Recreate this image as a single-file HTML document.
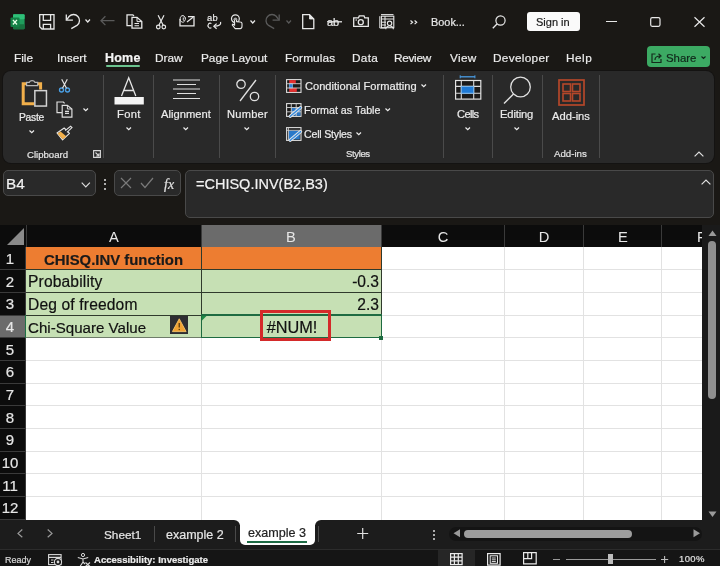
<!DOCTYPE html>
<html><head><meta charset="utf-8">
<style>
*{margin:0;padding:0;box-sizing:border-box}
html,body{width:720px;height:566px;overflow:hidden;background:#1a1815;font-family:"Liberation Sans",sans-serif;color:#f0f0f0}
.a{position:absolute}
.t{position:absolute;white-space:nowrap;line-height:1;will-change:transform;-webkit-text-stroke:0.2px currentColor}
svg{position:absolute;overflow:visible}
</style></head><body>

<svg style="left:9.50px;top:13.50px" width="15" height="16" viewBox="0 0 15 16">
<rect x="3" y="0.3" width="11.6" height="14.9" rx="1.2" fill="#1f9d5c"/>
<rect x="3" y="0.3" width="11.6" height="5" rx="1" fill="#2fbf78"/>
<rect x="3" y="10.2" width="11.6" height="5" rx="1" fill="#17723f"/>
<rect x="0.5" y="3.4" width="9" height="9.5" rx="1" fill="#138246"/>
<path d="M2.9 5.9 L7 10.5 M7 5.9 L2.9 10.5" stroke="#e8ffe8" stroke-width="1.3"/>
</svg>
<svg style="left:38.50px;top:13.50px" width="16" height="16" viewBox="0 0 16 16"><path d="M0.7 0.7 H15 V15 H3 L0.7 12.7 Z" fill="none" stroke="#e8e8e8" stroke-width="1.3"/>
<path d="M4.3 0.7 V6.4 H11.6 V0.7" fill="none" stroke="#e8e8e8" stroke-width="1.3"/>
<path d="M4.3 15 V10.3 H11.6 V15" fill="none" stroke="#e8e8e8" stroke-width="1.3"/></svg>
<svg style="left:65.00px;top:13.00px" width="16" height="17" viewBox="0 0 16 17"><path d="M1.3 1.4 V7.2 H7.9" fill="none" stroke="#e8e8e8" stroke-width="1.3"/>
<path d="M1.8 6.7 L4.26 3.26 A6 6 0 1 1 12.36 12.1 L6.3 15.6" fill="none" stroke="#e8e8e8" stroke-width="1.3"/></svg>
<svg style="left:84.50px;top:19.00px" width="6" height="4" viewBox="0 0 6 4"><path d="M0.5 0.5 L2.75 3 L5 0.5" fill="none" stroke="#e8e8e8" stroke-width="1.2"/></svg>
<svg style="left:100.00px;top:16.00px" width="15" height="10" viewBox="0 0 15 10"><path d="M14.5 4.7 H1 M5.4 0.3 L1 4.7 L5.4 9.1" fill="none" stroke="#5a5a5a" stroke-width="1.3"/></svg>
<svg style="left:126.00px;top:14.00px" width="17" height="15" viewBox="0 0 17 15"><path d="M5.5 11.7 H1 V0.8 H6.8 L8 2" fill="none" stroke="#e8e8e8" stroke-width="1.3"/>
<path d="M6 3.3 H11 L15.8 7.6 V14.2 H6 Z" fill="none" stroke="#e8e8e8" stroke-width="1.3"/>
<path d="M11 3.3 V7.6 H15.8" fill="none" stroke="#e8e8e8" stroke-width="1"/>
<path d="M8.5 9.5 H13 M8.5 11.7 H13" stroke="#e8e8e8" stroke-width="1.1"/></svg>
<svg style="left:155.50px;top:14.50px" width="10" height="15" viewBox="0 0 10 15"><circle cx="2.3" cy="12" r="1.8" fill="none" stroke="#e8e8e8" stroke-width="1.2"/>
<circle cx="7.8" cy="12" r="1.8" fill="none" stroke="#e8e8e8" stroke-width="1.2"/>
<path d="M2.9 10.3 L8 0.2 M7.2 10.3 L2.1 0.2" stroke="#e8e8e8" stroke-width="1.2"/></svg>
<svg style="left:178.50px;top:14.00px" width="16" height="13" viewBox="0 0 16 13"><path d="M1 5 V11.8 H15 V2.6 H9" fill="none" stroke="#e8e8e8" stroke-width="1.3"/>
<path d="M8 8 L14 3.2" stroke="#e8e8e8" stroke-width="1.2"/>
<path d="M6.3 4.5 A2.6 3.3 0 1 0 5.5 7.3 M4.3 3.5 V5.8 A1 1 0 0 0 6.3 5.5 V3.5" fill="none" stroke="#e8e8e8" stroke-width="1"/></svg>
<div class="t" style="top:13.00px;font-size:9.40px;left:207.40px;color:#e8e8e8;letter-spacing:0.2px;">ab</div>
<svg style="left:207.00px;top:20.50px" width="16" height="9" viewBox="0 0 16 9"><path d="M4.4 2.6 A2.1 2.5 0 1 0 4.4 6.6" fill="none" stroke="#e8e8e8" stroke-width="1.1"/>
<path d="M13.6 0.9 C14.2 3.6 12.5 5.2 7.2 5.2" fill="none" stroke="#e8e8e8" stroke-width="1.2"/>
<path d="M9.6 2.6 L6.8 5.2 L9.6 7.8" fill="none" stroke="#e8e8e8" stroke-width="1.2"/></svg>
<svg style="left:230.50px;top:14.00px" width="12" height="16" viewBox="0 0 12 16"><circle cx="4.4" cy="4.7" r="3.9" fill="none" stroke="#e8e8e8" stroke-width="1.2"/>
<circle cx="4.4" cy="5.3" r="1.9" fill="#a0a0a0"/>
<path d="M3.6 6 V11.2 L1.8 10 L1.2 11 L4.2 14.6 H9.2 C10.6 14.6 11 13.4 11 12 V9.6 C11 8.6 10.3 8 9.3 8 L5.6 7.6 V6" fill="#1a1815" stroke="#e8e8e8" stroke-width="1.1" stroke-linejoin="round"/></svg>
<svg style="left:249.80px;top:19.50px" width="6" height="4" viewBox="0 0 6 4"><path d="M0.5 0.5 L2.75 3 L5 0.5" fill="none" stroke="#e8e8e8" stroke-width="1.2"/></svg>
<svg style="left:266.00px;top:13.00px" width="16" height="17" viewBox="0 0 16 17"><path d="M13.2 1.4 V7.2 H6.6" fill="none" stroke="#5a5a5a" stroke-width="1.3"/>
<path d="M12.7 6.7 L10.24 3.26 A6 6 0 1 0 2.14 12.1 L8.2 15.6" fill="none" stroke="#5a5a5a" stroke-width="1.3"/></svg>
<svg style="left:285.50px;top:19.50px" width="6" height="4" viewBox="0 0 6 4"><path d="M0.5 0.5 L2.75 3 L5 0.5" fill="none" stroke="#5a5a5a" stroke-width="1.2"/></svg>
<svg style="left:302.00px;top:14.00px" width="13" height="15.5" viewBox="0 0 13 15.5"><path d="M0.7 0.7 H7.5 L11.8 5 V14.6 H0.7 Z" fill="none" stroke="#e8e8e8" stroke-width="1.3"/><path d="M7.5 0.7 V5 H11.8 Z" fill="#e8e8e8" stroke="#e8e8e8" stroke-width="0.8"/></svg>
<div class="t" style="top:17.00px;font-size:11.00px;left:327.00px;color:#e8e8e8;">ab</div>
<svg style="left:326.50px;top:21.30px" width="15" height="2" viewBox="0 0 15 2"><path d="M0 0.8 H15" stroke="#e8e8e8" stroke-width="1.3"/></svg>
<svg style="left:352.50px;top:14.50px" width="16" height="12" viewBox="0 0 16 12"><path d="M0.7 2.8 H5.5 L6.3 0.8 H11 L11.8 2.8 H15.3 V11.3 H0.7 Z" fill="none" stroke="#e8e8e8" stroke-width="1.3"/>
<circle cx="7.8" cy="7.2" r="2.5" fill="none" stroke="#e8e8e8" stroke-width="1.3"/><circle cx="3.2" cy="5" r="0.8" fill="#e8e8e8"/></svg>
<svg style="left:379.00px;top:14.00px" width="16" height="15.5" viewBox="0 0 16 15.5"><path d="M2 0.6 H14.5 M0.8 2.2 V14 H7" fill="none" stroke="#e8e8e8" stroke-width="1"/>
<rect x="2.4" y="2.2" width="12.4" height="11.5" fill="none" stroke="#e8e8e8" stroke-width="1.1"/>
<path d="M2.4 5 H14.8 M2.4 8.2 H7 M2.4 11 H7 M6 2.2 V13.7" stroke="#e8e8e8" stroke-width="1"/>
<circle cx="10.6" cy="9.3" r="2.2" fill="#1a1815" stroke="#e8e8e8" stroke-width="1.1"/>
<path d="M6.8 15.2 A3.8 3.3 0 0 1 14.4 15.2" fill="none" stroke="#e8e8e8" stroke-width="1.1"/></svg>
<svg style="left:409.50px;top:19.80px" width="8" height="5" viewBox="0 0 8 5"><path d="M0.5 0.5 L2.6 2.3 L0.5 4.1 M4.6 0.5 L6.7 2.3 L4.6 4.1" fill="none" stroke="#e8e8e8" stroke-width="1.2"/></svg>
<div class="t" style="top:17.00px;font-size:10.90px;left:431.30px;color:#e8e8e8;">Book...</div>
<svg style="left:492.00px;top:14.50px" width="14" height="14" viewBox="0 0 14 14"><circle cx="8.5" cy="5.5" r="4.6" fill="none" stroke="#e8e8e8" stroke-width="1.2"/><path d="M5.2 8.8 L0.8 13.2" stroke="#e8e8e8" stroke-width="1.3"/></svg>
<div class="a" style="left:527.00px;top:12.00px;width:53.00px;height:18.50px;background:#fafafa;border-radius:3px"></div>
<div class="t" style="top:17.00px;font-size:11.00px;left:535.90px;color:#1a1a1a;">Sign in</div>
<div class="a" style="left:606.00px;top:20.50px;width:10.50px;height:1.20px;background:#e8e8e8;"></div>
<svg style="left:649.50px;top:16.50px" width="11" height="10" viewBox="0 0 11 10"><rect x="0.7" y="0.7" width="9.3" height="8.6" rx="1.5" fill="none" stroke="#e8e8e8" stroke-width="1.2"/></svg>
<svg style="left:693.50px;top:16.50px" width="11" height="10" viewBox="0 0 11 10"><path d="M0.5 0.3 L10.5 9.7 M10.5 0.3 L0.5 9.7" stroke="#e8e8e8" stroke-width="1.2"/></svg>
<div class="t" style="top:53.00px;font-size:11.80px;left:14.00px;color:#ececec;letter-spacing:0px;">File</div>
<div class="t" style="top:53.00px;font-size:11.80px;left:57.00px;color:#ececec;letter-spacing:0px;">Insert</div>
<div class="t" style="top:53.00px;font-size:11.80px;left:155.20px;color:#ececec;letter-spacing:0px;">Draw</div>
<div class="t" style="top:53.00px;font-size:11.80px;left:201.00px;color:#ececec;letter-spacing:0px;">Page Layout</div>
<div class="t" style="top:53.00px;font-size:11.80px;left:285.40px;color:#ececec;letter-spacing:0.15px;">Formulas</div>
<div class="t" style="top:53.00px;font-size:11.80px;left:351.50px;color:#ececec;letter-spacing:0.3px;">Data</div>
<div class="t" style="top:53.00px;font-size:11.80px;left:394.00px;color:#ececec;letter-spacing:-0.3px;">Review</div>
<div class="t" style="top:53.00px;font-size:11.80px;left:449.50px;color:#ececec;letter-spacing:0.3px;">View</div>
<div class="t" style="top:53.00px;font-size:11.80px;left:493.10px;color:#ececec;letter-spacing:0.3px;">Developer</div>
<div class="t" style="top:53.00px;font-size:11.80px;left:566.00px;color:#ececec;letter-spacing:0.5px;">Help</div>
<div class="t" style="top:52.00px;font-size:12.50px;left:104.50px;color:#f5f5f5;font-weight:bold;letter-spacing:0.2px;">Home</div>
<div class="a" style="left:105.50px;top:65.20px;width:34.50px;height:2.00px;background:#6cc48f;border-radius:1px"></div>
<div class="a" style="left:647.00px;top:46.20px;width:63.00px;height:21.30px;background:#3caa63;border-radius:4px"></div>
<svg style="left:650.50px;top:52.00px" width="12" height="11" viewBox="0 0 12 11"><path d="M4.5 2 H1 V10.5 H10 V7" fill="none" stroke="#152a1c" stroke-width="1.2"/><path d="M4 8 C4 5 6 4 9 4 M7.5 1.8 L10 4 L7.5 6.2" fill="none" stroke="#152a1c" stroke-width="1.2"/></svg>
<div class="t" style="top:53.00px;font-size:11.40px;left:665.50px;color:#10261a;">Share</div>
<svg style="left:701.00px;top:56.00px" width="5" height="3.5" viewBox="0 0 5 3.5"><path d="M0.5 0.5 L2.5 2.5 L4.5 0.5" fill="none" stroke="#10261a" stroke-width="1.1"/></svg>
<div class="a" style="left:3.00px;top:71.00px;width:711.00px;height:91.50px;background:#292929;border-radius:8px;box-shadow:0 0 0 1px #141312"></div>
<div class="a" style="left:102.75px;top:75.00px;width:1.00px;height:82.50px;background:#4a4a4a;"></div>
<div class="a" style="left:152.75px;top:75.00px;width:1.00px;height:82.50px;background:#4a4a4a;"></div>
<div class="a" style="left:219.00px;top:75.00px;width:1.00px;height:82.50px;background:#4a4a4a;"></div>
<div class="a" style="left:274.50px;top:75.00px;width:1.00px;height:82.50px;background:#4a4a4a;"></div>
<div class="a" style="left:442.50px;top:75.00px;width:1.00px;height:82.50px;background:#4a4a4a;"></div>
<div class="a" style="left:492.00px;top:75.00px;width:1.00px;height:82.50px;background:#4a4a4a;"></div>
<div class="a" style="left:542.00px;top:75.00px;width:1.00px;height:82.50px;background:#4a4a4a;"></div>
<div class="a" style="left:599.00px;top:75.00px;width:1.00px;height:82.50px;background:#4a4a4a;"></div>
<svg style="left:21.00px;top:79.00px" width="27" height="29" viewBox="0 0 27 29"><path d="M5.5 4.8 H2.2 V24.7 H13" fill="none" stroke="#f2b04b" stroke-width="3"/>
<path d="M16.5 4.8 H19.6 V10.5" fill="none" stroke="#f2b04b" stroke-width="3"/>
<path d="M5.6 6.6 V3.3 H8.3 A3 2.6 0 0 1 13.9 3.3 H16.7 V6.6 Z" fill="#292929" stroke="#b8b8b8" stroke-width="1.2"/>
<rect x="13.85" y="11.65" width="11.6" height="15.4" fill="#292929" stroke="#d2d2d2" stroke-width="1.5"/></svg>
<div class="t" style="top:113.00px;font-size:10.30px;left:18.60px;color:#ececec;letter-spacing:-0.25px;">Paste</div>
<svg style="left:29.25px;top:130.00px" width="5.5" height="3.5" viewBox="0 0 5.5 3.5"><path d="M0.5 0.5 L2.75 2.7 L5 0.5" fill="none" stroke="#ececec" stroke-width="1.2"/></svg>
<svg style="left:59.00px;top:79.00px" width="11" height="14" viewBox="0 0 11 14"><circle cx="2.5" cy="11" r="2" fill="none" stroke="#4aa0e6" stroke-width="1.3"/>
<circle cx="8.5" cy="11" r="2" fill="none" stroke="#4aa0e6" stroke-width="1.3"/>
<path d="M3.5 9.3 L8.3 0.3 M7.5 9.3 L2.7 0.3" stroke="#e0e0e0" stroke-width="1.2"/></svg>
<svg style="left:56.00px;top:101.00px" width="17" height="17" viewBox="0 0 17 17"><path d="M6 11.7 H1 V1 H7.4 L8.6 2.3" fill="none" stroke="#dedede" stroke-width="1.2"/>
<path d="M6.2 4.3 H11.4 L15.9 8 V16.1 H6.2 Z" fill="#292929" stroke="#dedede" stroke-width="1.2"/>
<path d="M11.4 4.3 V8 H15.9" fill="none" stroke="#dedede" stroke-width="1"/>
<path d="M9 10.4 H13 M9 12.4 H13" stroke="#dedede" stroke-width="1.1"/></svg>
<svg style="left:82.95px;top:108.20px" width="5.5" height="3.5" viewBox="0 0 5.5 3.5"><path d="M0.5 0.5 L2.75 2.7 L5 0.5" fill="none" stroke="#ececec" stroke-width="1.2"/></svg>
<svg style="left:56.00px;top:125.00px" width="17" height="16" viewBox="0 0 17 16"><path d="M1 8 L5.6 12.5 L6.6 14.9 L1 8 Z" fill="#f2b04b"/>
<path d="M1 8 L8.2 3 L13.5 8.4 L6.6 14.9 Z" fill="#292929" stroke="#e6e6e6" stroke-width="1.1" stroke-linejoin="round"/>
<path d="M1.6 8.4 L4.5 6.5 L10.5 11.5 L6.6 14.3 Z" fill="#f2b04b"/>
<path d="M9.2 5.6 L14.6 1.2 L16 2.6 L11 7.3" fill="#292929" stroke="#e6e6e6" stroke-width="1.1"/></svg>
<div class="t" style="top:150.00px;font-size:9.60px;left:26.60px;color:#e4e4e4;">Clipboard</div>
<svg style="left:92.50px;top:150.00px" width="8" height="8" viewBox="0 0 8 8"><path d="M0.6 7.4 V0.6 H7.4 V7.4 Z" fill="none" stroke="#d8d8d8" stroke-width="1.1"/><path d="M2.5 2.5 L6 6 M6 3.2 V6 H3.2" fill="none" stroke="#d8d8d8" stroke-width="1.1"/></svg>
<svg style="left:113.50px;top:77.00px" width="30" height="28" viewBox="0 0 30 28"><path d="M7.5 19 L14.7 0.8 L21.8 19 M10 13.5 H19.5" fill="none" stroke="#e6e6e6" stroke-width="1.3"/>
<rect x="0.5" y="20" width="29.3" height="7.5" fill="#f4f4f4"/></svg>
<div class="t" style="top:109.00px;font-size:11.20px;left:116.80px;color:#ececec;letter-spacing:0.3px;">Font</div>
<svg style="left:125.75px;top:126.70px" width="5.5" height="3.5" viewBox="0 0 5.5 3.5"><path d="M0.5 0.5 L2.75 2.7 L5 0.5" fill="none" stroke="#ececec" stroke-width="1.2"/></svg>
<svg style="left:172.50px;top:79.00px" width="27" height="21" viewBox="0 0 27 21"><path d="M0 1 H27 M4 5.5 H23 M0 10 H27 M4 14.5 H23 M0 19.5 H27" stroke="#dedede" stroke-width="1.2"/></svg>
<div class="t" style="top:109.00px;font-size:11.20px;left:161.00px;color:#ececec;">Alignment</div>
<svg style="left:182.85px;top:126.70px" width="5.5" height="3.5" viewBox="0 0 5.5 3.5"><path d="M0.5 0.5 L2.75 2.7 L5 0.5" fill="none" stroke="#ececec" stroke-width="1.2"/></svg>
<svg style="left:235.50px;top:78.50px" width="24" height="23" viewBox="0 0 24 23"><circle cx="5" cy="5.2" r="4.2" fill="none" stroke="#e0e0e0" stroke-width="1.3"/>
<circle cx="18.5" cy="17.5" r="4.2" fill="none" stroke="#e0e0e0" stroke-width="1.3"/>
<path d="M20 1 L4 22" stroke="#e0e0e0" stroke-width="1.3"/></svg>
<div class="t" style="top:109.00px;font-size:11.10px;left:226.70px;color:#ececec;letter-spacing:0.25px;">Number</div>
<svg style="left:244.15px;top:126.70px" width="5.5" height="3.5" viewBox="0 0 5.5 3.5"><path d="M0.5 0.5 L2.75 2.7 L5 0.5" fill="none" stroke="#ececec" stroke-width="1.2"/></svg>
<svg style="left:286.00px;top:78.50px" width="16" height="14" viewBox="0 0 16 14"><rect x="0.6" y="0.6" width="14.4" height="12.8" fill="#1a1a1a" stroke="#dcdcdc" stroke-width="1.1"/>
<rect x="3.2" y="1.1" width="6.6" height="3.6" fill="#e53030"/>
<rect x="3.2" y="9" width="7.6" height="3.9" fill="#e53030"/>
<rect x="3.2" y="4.7" width="3.4" height="4.3" fill="#2f7fd8" stroke="#8cc4f2" stroke-width="0.6"/>
<path d="M0.6 4.7 H15 M0.6 9 H15" stroke="#cfcfcf" stroke-width="0.9"/></svg>
<div class="t" style="top:81.00px;font-size:11.10px;left:305.00px;color:#ececec;">Conditional Formatting</div>
<svg style="left:420.95px;top:84.00px" width="5.5" height="3.5" viewBox="0 0 5.5 3.5"><path d="M0.5 0.5 L2.75 2.7 L5 0.5" fill="none" stroke="#ececec" stroke-width="1.2"/></svg>
<svg style="left:286.00px;top:102.50px" width="16" height="14" viewBox="0 0 16 14"><rect x="0.6" y="0.6" width="14.4" height="12.8" fill="#1a1a1a" stroke="#dcdcdc" stroke-width="1.1"/>
<rect x="5.3" y="4.5" width="9.1" height="8.3" fill="#2a78c8"/>
<path d="M5.3 0.6 V13.4 M10.2 0.6 V13.4 M0.6 4.5 H15 M0.6 8.8 H15" stroke="#cfcfcf" stroke-width="0.9"/>
<path d="M4.2 13.2 L14.6 4.6" stroke="#e8e8e8" stroke-width="3.2" stroke-linecap="round"/>
<path d="M4.2 13.2 L14.6 4.6" stroke="#3a8ee0" stroke-width="1.4" stroke-linecap="round"/></svg>
<div class="t" style="top:105.00px;font-size:10.70px;left:304.00px;color:#ececec;">Format as Table</div>
<svg style="left:384.75px;top:108.00px" width="5.5" height="3.5" viewBox="0 0 5.5 3.5"><path d="M0.5 0.5 L2.75 2.7 L5 0.5" fill="none" stroke="#ececec" stroke-width="1.2"/></svg>
<svg style="left:286.00px;top:126.50px" width="16" height="14" viewBox="0 0 16 14"><rect x="0.6" y="0.6" width="14.4" height="12.8" fill="#1a1a1a" stroke="#dcdcdc" stroke-width="1.1"/>
<rect x="2.4" y="3.6" width="11.4" height="8.8" fill="#2a78c8"/>
<path d="M0.6 3.3 H15 M2.4 0.6 V13.4" stroke="#cfcfcf" stroke-width="0.9"/>
<path d="M4.2 13.2 L14.6 4.6" stroke="#e8e8e8" stroke-width="3.2" stroke-linecap="round"/>
<path d="M4.2 13.2 L14.6 4.6" stroke="#3a8ee0" stroke-width="1.4" stroke-linecap="round"/></svg>
<div class="t" style="top:129.00px;font-size:10.60px;left:304.00px;color:#ececec;letter-spacing:-0.2px;">Cell Styles</div>
<svg style="left:355.95px;top:131.90px" width="5.5" height="3.5" viewBox="0 0 5.5 3.5"><path d="M0.5 0.5 L2.75 2.7 L5 0.5" fill="none" stroke="#ececec" stroke-width="1.2"/></svg>
<div class="t" style="top:149.00px;font-size:9.60px;left:346.00px;color:#e4e4e4;letter-spacing:-0.4px;">Styles</div>
<svg style="left:455.00px;top:74.00px" width="27" height="27" viewBox="0 0 27 27"><path d="M5.2 2.8 H19.9" stroke="#4a9de6" stroke-width="1.3"/><path d="M5.2 1.3 V4.3 M19.9 1.3 V4.3" stroke="#4a9de6" stroke-width="1"/>
<rect x="0.6" y="6.5" width="25.2" height="18.6" fill="#1a1a1a" stroke="#e2e2e2" stroke-width="1.2"/>
<path d="M6.3 6.5 V25.1 M18.7 6.5 V25.1 M0.6 12.4 H25.8 M0.6 19.2 H25.8" stroke="#dcdcdc" stroke-width="1.1"/>
<rect x="6.3" y="12.4" width="12.4" height="6.8" fill="#1f7ad6" stroke="#7db9ee" stroke-width="0.9"/></svg>
<div class="t" style="top:109.00px;font-size:11.20px;left:456.60px;color:#ececec;letter-spacing:-0.7px;">Cells</div>
<svg style="left:464.75px;top:126.70px" width="5.5" height="3.5" viewBox="0 0 5.5 3.5"><path d="M0.5 0.5 L2.75 2.7 L5 0.5" fill="none" stroke="#ececec" stroke-width="1.2"/></svg>
<svg style="left:503.00px;top:76.00px" width="30" height="29" viewBox="0 0 30 29"><circle cx="17.5" cy="11" r="9.8" fill="none" stroke="#e0e0e0" stroke-width="1.3"/><path d="M10.5 18 L1 27.5" stroke="#e0e0e0" stroke-width="1.4"/></svg>
<div class="t" style="top:109.00px;font-size:11.20px;left:499.50px;color:#ececec;letter-spacing:-0.15px;">Editing</div>
<svg style="left:514.25px;top:126.70px" width="5.5" height="3.5" viewBox="0 0 5.5 3.5"><path d="M0.5 0.5 L2.75 2.7 L5 0.5" fill="none" stroke="#ececec" stroke-width="1.2"/></svg>
<svg style="left:557.50px;top:78.50px" width="27" height="27" viewBox="0 0 27 27"><rect x="1" y="1" width="25" height="25" fill="none" stroke="#b4472a" stroke-width="1.7"/>
<rect x="5" y="5" width="7.5" height="7.5" fill="none" stroke="#b4472a" stroke-width="1.6"/>
<rect x="14.5" y="5" width="7.5" height="7.5" fill="none" stroke="#b4472a" stroke-width="1.6"/>
<rect x="5" y="14.5" width="7.5" height="7.5" fill="none" stroke="#b4472a" stroke-width="1.6"/>
<rect x="14.5" y="14.5" width="7.5" height="7.5" fill="none" stroke="#b4472a" stroke-width="1.6"/></svg>
<div class="t" style="top:111.00px;font-size:11.20px;left:552.00px;color:#ececec;">Add-ins</div>
<div class="t" style="top:149.00px;font-size:9.70px;left:554.30px;color:#e4e4e4;">Add-ins</div>
<svg style="left:693.80px;top:150.50px" width="10" height="6" viewBox="0 0 10 6"><path d="M0.6 5.4 L5 1 L9.4 5.4" fill="none" stroke="#e0e0e0" stroke-width="1.2"/></svg>
<div class="a" style="left:2.50px;top:170.00px;width:93.00px;height:26.30px;background:#292929;border:1px solid #494949;border-radius:5px"></div>
<div class="t" style="top:176.00px;font-size:15.30px;left:6.30px;color:#f2f2f2;">B4</div>
<svg style="left:81.00px;top:182.00px" width="10" height="6" viewBox="0 0 10 6"><path d="M0.7 0.7 L4.8 4.8 L8.9 0.7" fill="none" stroke="#dcdcdc" stroke-width="1.2"/></svg>
<div class="a" style="left:104.00px;top:178.50px;width:2.20px;height:2.20px;background:#e0e0e0;border-radius:1px"></div>
<div class="a" style="left:104.00px;top:183.00px;width:2.20px;height:2.20px;background:#e0e0e0;border-radius:1px"></div>
<div class="a" style="left:104.00px;top:187.50px;width:2.20px;height:2.20px;background:#e0e0e0;border-radius:1px"></div>
<div class="a" style="left:114.00px;top:170.00px;width:67.00px;height:26.00px;background:#292929;border:1px solid #494949;border-radius:5px"></div>
<svg style="left:120.00px;top:177.00px" width="12" height="12" viewBox="0 0 12 12"><path d="M1 1 L11 11 M11 1 L1 11" stroke="#7a7a7a" stroke-width="1.2"/></svg>
<svg style="left:140.00px;top:177.00px" width="14" height="12" viewBox="0 0 14 12"><path d="M1 6 L5 10.5 L13 1" fill="none" stroke="#7a7a7a" stroke-width="1.2"/></svg>
<div class="t" style="top:178.00px;font-size:14.00px;left:163.50px;color:#e0e0e0;font-family:'Liberation Serif',serif;font-style:italic;">fx</div>
<div class="a" style="left:185.00px;top:170.00px;width:529.00px;height:48.00px;background:#292929;border:1px solid #494949;border-radius:5px"></div>
<div class="t" style="top:177.00px;font-size:14.50px;left:196.40px;color:#f2f2f2;">=CHISQ.INV(B2,B3)</div>
<svg style="left:700.50px;top:179.00px" width="10" height="6" viewBox="0 0 10 6"><path d="M0.6 5.4 L5 1 L9.4 5.4" fill="none" stroke="#e0e0e0" stroke-width="1.2"/></svg>
<div class="a" style="left:0.00px;top:225.00px;width:702.00px;height:22.00px;background:#0c0c0c;"></div>
<div class="a" style="left:201.00px;top:225.00px;width:180.00px;height:22.00px;background:#6b6b6b;"></div>
<svg style="left:0.00px;top:225.00px" width="26" height="22" viewBox="0 0 26 22"><polygon points="24,3 24,20 7,20" fill="#8a8a8a"/></svg>
<div class="a" style="left:25.50px;top:225.00px;width:1.00px;height:22.00px;background:#3a3a3a;"></div>
<div class="a" style="left:200.50px;top:225.00px;width:1.00px;height:22.00px;background:#3a3a3a;"></div>
<div class="a" style="left:380.50px;top:225.00px;width:1.00px;height:22.00px;background:#3a3a3a;"></div>
<div class="a" style="left:504.00px;top:225.00px;width:1.00px;height:22.00px;background:#3a3a3a;"></div>
<div class="a" style="left:583.00px;top:225.00px;width:1.00px;height:22.00px;background:#3a3a3a;"></div>
<div class="a" style="left:661.00px;top:225.00px;width:1.00px;height:22.00px;background:#3a3a3a;"></div>
<div class="t" style="top:230.00px;font-size:14.70px;left:83.50px;width:60.00px;text-align:center;color:#e6e6e6;-webkit-text-stroke:0;">A</div>
<div class="t" style="top:230.00px;font-size:14.70px;left:261.00px;width:60.00px;text-align:center;color:#e6e6e6;-webkit-text-stroke:0;">B</div>
<div class="t" style="top:230.00px;font-size:14.70px;left:412.75px;width:60.00px;text-align:center;color:#e6e6e6;-webkit-text-stroke:0;">C</div>
<div class="t" style="top:230.00px;font-size:14.70px;left:514.00px;width:60.00px;text-align:center;color:#e6e6e6;-webkit-text-stroke:0;">D</div>
<div class="t" style="top:230.00px;font-size:14.70px;left:592.50px;width:60.00px;text-align:center;color:#e6e6e6;-webkit-text-stroke:0;">E</div>
<div class="a" style="left:661.5px;top:225px;width:40.5px;height:22px;overflow:hidden">
<div class="t" style="top:5.00px;font-size:14.70px;left:35.30px;color:#e6e6e6;-webkit-text-stroke:0;">F</div>
</div>
<div class="a" style="left:0.00px;top:247.00px;width:26.00px;height:273.00px;background:#0c0c0c;"></div>
<div class="a" style="left:0.00px;top:315.04px;width:25.00px;height:22.68px;background:#6b6b6b;"></div>
<div class="a" style="left:0.00px;top:269.18px;width:26.00px;height:1.00px;background:#3a3a3a;"></div>
<div class="t" style="top:251.00px;font-size:15.00px;left:-3.20px;width:26.00px;text-align:center;color:#e6e6e6;">1</div>
<div class="a" style="left:0.00px;top:291.86px;width:26.00px;height:1.00px;background:#3a3a3a;"></div>
<div class="t" style="top:274.00px;font-size:15.00px;left:-3.20px;width:26.00px;text-align:center;color:#e6e6e6;">2</div>
<div class="a" style="left:0.00px;top:314.54px;width:26.00px;height:1.00px;background:#3a3a3a;"></div>
<div class="t" style="top:296.00px;font-size:15.00px;left:-3.20px;width:26.00px;text-align:center;color:#e6e6e6;">3</div>
<div class="a" style="left:0.00px;top:337.22px;width:26.00px;height:1.00px;background:#3a3a3a;"></div>
<div class="t" style="top:319.00px;font-size:15.00px;left:-3.20px;width:26.00px;text-align:center;color:#e6e6e6;">4</div>
<div class="a" style="left:0.00px;top:359.90px;width:26.00px;height:1.00px;background:#3a3a3a;"></div>
<div class="t" style="top:342.00px;font-size:15.00px;left:-3.20px;width:26.00px;text-align:center;color:#e6e6e6;">5</div>
<div class="a" style="left:0.00px;top:382.58px;width:26.00px;height:1.00px;background:#3a3a3a;"></div>
<div class="t" style="top:364.00px;font-size:15.00px;left:-3.20px;width:26.00px;text-align:center;color:#e6e6e6;">6</div>
<div class="a" style="left:0.00px;top:405.26px;width:26.00px;height:1.00px;background:#3a3a3a;"></div>
<div class="t" style="top:387.00px;font-size:15.00px;left:-3.20px;width:26.00px;text-align:center;color:#e6e6e6;">7</div>
<div class="a" style="left:0.00px;top:427.94px;width:26.00px;height:1.00px;background:#3a3a3a;"></div>
<div class="t" style="top:410.00px;font-size:15.00px;left:-3.20px;width:26.00px;text-align:center;color:#e6e6e6;">8</div>
<div class="a" style="left:0.00px;top:450.62px;width:26.00px;height:1.00px;background:#3a3a3a;"></div>
<div class="t" style="top:432.00px;font-size:15.00px;left:-3.20px;width:26.00px;text-align:center;color:#e6e6e6;">9</div>
<div class="a" style="left:0.00px;top:473.30px;width:26.00px;height:1.00px;background:#3a3a3a;"></div>
<div class="t" style="top:455.00px;font-size:15.00px;left:-3.20px;width:26.00px;text-align:center;color:#e6e6e6;">10</div>
<div class="a" style="left:0.00px;top:495.98px;width:26.00px;height:1.00px;background:#3a3a3a;"></div>
<div class="t" style="top:478.00px;font-size:15.00px;left:-3.20px;width:26.00px;text-align:center;color:#e6e6e6;">11</div>
<div class="a" style="left:0.00px;top:518.66px;width:26.00px;height:1.00px;background:#3a3a3a;"></div>
<div class="t" style="top:500.00px;font-size:15.00px;left:-3.20px;width:26.00px;text-align:center;color:#e6e6e6;">12</div>
<div class="a" style="left:25.00px;top:247.00px;width:1.00px;height:273.00px;background:#3a3a3a;"></div>
<div class="a" style="left:25.00px;top:315.04px;width:1.50px;height:22.68px;background:#1e7145;"></div>
<div class="a" style="left:26.00px;top:247.00px;width:676.00px;height:273.00px;background:#ffffff;"></div>
<div class="a" style="left:26.00px;top:269.18px;width:676.00px;height:1.00px;background:#e2e2e2;"></div>
<div class="a" style="left:26.00px;top:291.86px;width:676.00px;height:1.00px;background:#e2e2e2;"></div>
<div class="a" style="left:26.00px;top:314.54px;width:676.00px;height:1.00px;background:#e2e2e2;"></div>
<div class="a" style="left:26.00px;top:337.22px;width:676.00px;height:1.00px;background:#e2e2e2;"></div>
<div class="a" style="left:26.00px;top:359.90px;width:676.00px;height:1.00px;background:#e2e2e2;"></div>
<div class="a" style="left:26.00px;top:382.58px;width:676.00px;height:1.00px;background:#e2e2e2;"></div>
<div class="a" style="left:26.00px;top:405.26px;width:676.00px;height:1.00px;background:#e2e2e2;"></div>
<div class="a" style="left:26.00px;top:427.94px;width:676.00px;height:1.00px;background:#e2e2e2;"></div>
<div class="a" style="left:26.00px;top:450.62px;width:676.00px;height:1.00px;background:#e2e2e2;"></div>
<div class="a" style="left:26.00px;top:473.30px;width:676.00px;height:1.00px;background:#e2e2e2;"></div>
<div class="a" style="left:26.00px;top:495.98px;width:676.00px;height:1.00px;background:#e2e2e2;"></div>
<div class="a" style="left:200.50px;top:247.00px;width:1.00px;height:273.00px;background:#e2e2e2;"></div>
<div class="a" style="left:380.50px;top:247.00px;width:1.00px;height:273.00px;background:#e2e2e2;"></div>
<div class="a" style="left:504.00px;top:247.00px;width:1.00px;height:273.00px;background:#e2e2e2;"></div>
<div class="a" style="left:583.00px;top:247.00px;width:1.00px;height:273.00px;background:#e2e2e2;"></div>
<div class="a" style="left:661.00px;top:247.00px;width:1.00px;height:273.00px;background:#e2e2e2;"></div>
<div class="a" style="left:26.00px;top:247.00px;width:355.00px;height:22.68px;background:#ed7d31;"></div>
<div class="a" style="left:26.00px;top:269.68px;width:355.00px;height:68.04px;background:#c6e0b4;"></div>
<div class="a" style="left:26.00px;top:269.18px;width:355.50px;height:1.00px;background:#2f3a2c;"></div>
<div class="a" style="left:26.00px;top:291.86px;width:355.50px;height:1.00px;background:#2f3a2c;"></div>
<div class="a" style="left:26.00px;top:314.54px;width:355.50px;height:1.00px;background:#2f3a2c;"></div>
<div class="a" style="left:26.00px;top:337.22px;width:355.50px;height:1.00px;background:#6f7d6a;"></div>
<div class="a" style="left:200.50px;top:247.00px;width:1.00px;height:90.72px;background:#2f3a2c;"></div>
<div class="a" style="left:380.50px;top:247.00px;width:1.00px;height:90.72px;background:#2f3a2c;"></div>
<div class="t" style="top:253.00px;font-size:14.90px;left:26.00px;width:175.00px;text-align:center;color:#1a1a1a;font-weight:bold;">CHISQ.INV function</div>
<div class="t" style="top:274.00px;font-size:15.60px;left:27.50px;color:#111;letter-spacing:0.15px;">Probability</div>
<div class="t" style="top:297.00px;font-size:15.60px;left:27.50px;color:#111;letter-spacing:0.15px;">Deg of freedom</div>
<div class="t" style="top:320.00px;font-size:15.10px;left:28.00px;color:#111;">Chi-Square Value</div>
<div class="t" style="top:274.00px;font-size:15.60px;left:278.50px;width:100.00px;text-align:right;color:#111;">-0.3</div>
<div class="t" style="top:297.00px;font-size:15.60px;left:278.50px;width:100.00px;text-align:right;color:#111;">2.3</div>
<div class="t" style="top:319.00px;font-size:16.30px;left:231.80px;width:120.00px;text-align:center;color:#111;">#NUM!</div>
<div class="a" style="left:170.30px;top:315.80px;width:17.80px;height:17.80px;background:#2e2e32;"></div>
<svg style="left:171.50px;top:317.50px" width="15" height="14.5" viewBox="0 0 15 14.5"><path d="M7.25 0.8 L14.1 13.6 H0.4 Z" fill="#f0a232" stroke="#f6c46a" stroke-width="0.9" stroke-linejoin="round"/><path d="M7.25 5 V9.6" stroke="#5a3a10" stroke-width="1.3"/><circle cx="7.25" cy="11.6" r="0.75" fill="#5a3a10"/></svg>
<div class="a" style="left:201.00px;top:314.29px;width:180.50px;height:1.50px;background:#1e6b41;"></div>
<div class="a" style="left:201.00px;top:336.97px;width:180.50px;height:1.50px;background:#1e6b41;"></div>
<div class="a" style="left:200.50px;top:315.04px;width:1.25px;height:22.68px;background:#1e6b41;"></div>
<div class="a" style="left:380.50px;top:315.04px;width:1.25px;height:22.68px;background:#1e6b41;"></div>
<div class="a" style="left:379.00px;top:336.22px;width:3.50px;height:3.50px;background:#1e6b41;"></div>
<svg style="left:202.00px;top:315.84px" width="5" height="5" viewBox="0 0 5 5"><polygon points="0,0 4.5,0 0,4.5" fill="#1e8a45"/></svg>
<div class="a" style="left:260.00px;top:310.00px;width:71.00px;height:31.00px;background:transparent;border:3px solid #d42a2a"></div>
<div class="a" style="left:702.00px;top:225.00px;width:18.00px;height:295.00px;background:#1a1a1a;"></div>
<svg style="left:707.50px;top:230.00px" width="9" height="7" viewBox="0 0 9 7"><polygon points="4.5,0.5 8.5,6 0.5,6" fill="#9a9a9a"/></svg>
<div class="a" style="left:708.00px;top:241.00px;width:8.30px;height:158.00px;background:#8f8f8f;border-radius:4px"></div>
<svg style="left:707.50px;top:510.50px" width="9" height="7" viewBox="0 0 9 7"><polygon points="0.5,0.5 8.5,0.5 4.5,6" fill="#9a9a9a"/></svg>
<div class="a" style="left:0.00px;top:520.00px;width:720.00px;height:29.50px;background:#1c1c1c;"></div>
<svg style="left:16.50px;top:529.00px" width="6" height="9" viewBox="0 0 6 9"><path d="M5.3 0.5 L1 4.4 L5.3 8.3" fill="none" stroke="#9a9a9a" stroke-width="1.2"/></svg>
<svg style="left:46.50px;top:529.00px" width="6" height="9" viewBox="0 0 6 9"><path d="M0.7 0.5 L5 4.4 L0.7 8.3" fill="none" stroke="#9a9a9a" stroke-width="1.2"/></svg>
<div class="t" style="top:530.00px;font-size:11.80px;left:103.80px;color:#e6e6e6;">Sheet1</div>
<div class="a" style="left:153.50px;top:526.00px;width:1.00px;height:15.70px;background:#4a4a4a;"></div>
<div class="t" style="top:529.00px;font-size:12.50px;left:166.40px;color:#e6e6e6;">example 2</div>
<div class="a" style="left:235.00px;top:526.00px;width:1.00px;height:15.70px;background:#4a4a4a;"></div>
<div class="a" style="left:232.00px;top:519.00px;width:91.00px;height:6.00px;background:#ffffff;"></div>
<div class="a" style="left:0.00px;top:520.00px;width:240.00px;height:5.50px;background:#1c1c1c;border-top-right-radius:6px"></div>
<div class="a" style="left:315.00px;top:520.00px;width:387.00px;height:5.50px;background:#1c1c1c;border-top-left-radius:6px"></div>
<div class="a" style="left:240.00px;top:518.00px;width:75.00px;height:27.00px;background:#ffffff;border-radius:0 0 5px 5px"></div>
<div class="t" style="top:527.00px;font-size:12.60px;left:247.80px;color:#222;">example 3</div>
<div class="a" style="left:247.30px;top:541.00px;width:60.00px;height:2.00px;background:#1e6b45;"></div>
<div class="a" style="left:318.00px;top:526.00px;width:1.00px;height:15.70px;background:#4a4a4a;"></div>
<svg style="left:357.00px;top:528.00px" width="12" height="12" viewBox="0 0 12 12"><path d="M5.7 0 V11 M0.2 5.5 H11.2" stroke="#e0e0e0" stroke-width="1.2"/></svg>
<div class="a" style="left:433.00px;top:530.00px;width:2.00px;height:2.00px;background:#dcdcdc;border-radius:1px"></div>
<div class="a" style="left:433.00px;top:534.00px;width:2.00px;height:2.00px;background:#dcdcdc;border-radius:1px"></div>
<div class="a" style="left:433.00px;top:538.00px;width:2.00px;height:2.00px;background:#dcdcdc;border-radius:1px"></div>
<div class="a" style="left:449.00px;top:527.00px;width:253.00px;height:14.00px;background:#141414;border-radius:7px"></div>
<svg style="left:453.00px;top:529.40px" width="7.5" height="8.5" viewBox="0 0 7.5 8.5"><polygon points="7,0.2 7,8.3 0.5,4.25" fill="#9a9a9a"/></svg>
<div class="a" style="left:464.40px;top:530.00px;width:167.20px;height:7.70px;background:#9d9d9d;border-radius:4px"></div>
<svg style="left:692.50px;top:529.40px" width="7.5" height="8.5" viewBox="0 0 7.5 8.5"><polygon points="0.5,0.2 0.5,8.3 7,4.25" fill="#9a9a9a"/></svg>
<div class="a" style="left:0.00px;top:549.50px;width:720.00px;height:16.50px;background:#151515;"></div>
<div class="a" style="left:0.00px;top:549.00px;width:720.00px;height:1.00px;background:#2c2c2c;"></div>
<div class="t" style="top:556.00px;font-size:9.00px;left:4.60px;color:#d8d8d8;">Ready</div>
<svg style="left:48.00px;top:553.50px" width="15" height="12" viewBox="0 0 15 12"><rect x="0.6" y="0.6" width="12.5" height="10" fill="none" stroke="#d8d8d8" stroke-width="1.1"/>
<path d="M0.6 3.4 H13 M3 6 H5.5 M3 8.5 H5.5" stroke="#d8d8d8" stroke-width="1.1"/>
<circle cx="10" cy="8" r="3.6" fill="#151515" stroke="#d8d8d8" stroke-width="1.1"/><circle cx="10" cy="8" r="1.4" fill="#d8d8d8"/></svg>
<svg style="left:77.00px;top:552.50px" width="14" height="14" viewBox="0 0 14 14"><circle cx="6" cy="2" r="1.6" fill="none" stroke="#d8d8d8" stroke-width="1"/>
<path d="M0.8 4.5 L6 6 L11.2 4.5 M6 6 V9 L3 13.5 M6 9 L8 11" fill="none" stroke="#d8d8d8" stroke-width="1.1"/>
<path d="M8.5 9.5 L13 13.5 M13 9.5 L8.5 13.5" stroke="#d8d8d8" stroke-width="1.1"/></svg>
<div class="t" style="top:555.00px;font-size:9.55px;left:94.00px;color:#ececec;font-weight:bold;">Accessibility: Investigate</div>
<div class="a" style="left:437.80px;top:550.00px;width:37.20px;height:16.00px;background:#262626;"></div>
<svg style="left:450.00px;top:552.80px" width="13" height="12" viewBox="0 0 13 12"><rect x="0.6" y="0.6" width="11.5" height="11" fill="none" stroke="#eaeaea" stroke-width="1.2"/><path d="M4.4 0.6 V11.6 M8.3 0.6 V11.6 M0.6 4.2 H12.1 M0.6 7.9 H12.1" stroke="#eaeaea" stroke-width="1.2"/></svg>
<svg style="left:486.50px;top:552.50px" width="14" height="13" viewBox="0 0 14 13"><rect x="0.6" y="0.6" width="12.5" height="11.5" fill="none" stroke="#eaeaea" stroke-width="1.2"/><rect x="3.2" y="2.8" width="7.3" height="7.5" fill="none" stroke="#eaeaea" stroke-width="1"/><path d="M4.8 5 H8.8 M4.8 6.8 H8.8 M4.8 8.5 H8.8" stroke="#eaeaea" stroke-width="0.9"/></svg>
<svg style="left:523.30px;top:552.30px" width="14" height="13" viewBox="0 0 14 13"><path d="M0.6 0.6 H13.2 V11.9 H0.6 Z" fill="none" stroke="#eaeaea" stroke-width="1.2"/><path d="M4.8 0.6 V6.6 H8.6 V0.6 M0.6 6.6 H4.8" fill="none" stroke="#eaeaea" stroke-width="1.2"/></svg>
<div class="a" style="left:553.30px;top:558.50px;width:7.10px;height:1.20px;background:#9a9a9a;"></div>
<div class="a" style="left:565.60px;top:558.80px;width:90.40px;height:1.30px;background:#9a9a9a;"></div>
<div class="a" style="left:608.40px;top:553.90px;width:4.90px;height:10.40px;background:#bdbdbd;"></div>
<svg style="left:661.00px;top:556.00px" width="8" height="8" viewBox="0 0 8 8"><path d="M3.6 0 V7 M0 3.5 H7.2" stroke="#bdbdbd" stroke-width="1.1"/></svg>
<div class="t" style="top:554.00px;font-size:9.50px;left:679.00px;color:#e0e0e0;letter-spacing:0.4px;">100%</div>
</body></html>
